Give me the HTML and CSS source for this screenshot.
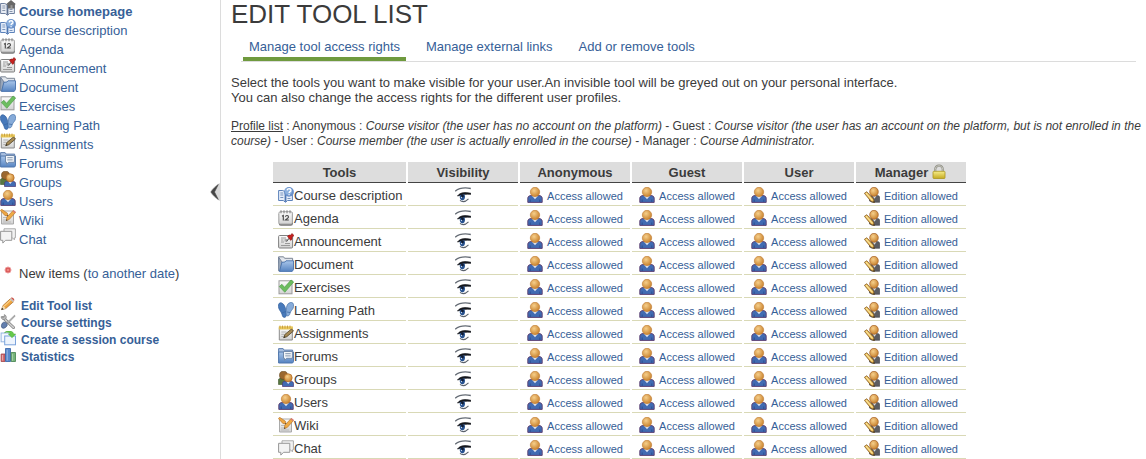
FILE: index.html
```html
<!DOCTYPE html>
<html lang="en">
<head>
<meta charset="utf-8">
<title>Edit Tool list</title>
<link rel="stylesheet" href="styles.css">
<script src="tools.js" defer></script>
</head>
<body>
<svg class="sprite" aria-hidden="true">
  <defs>
    <linearGradient id="blue" x1="0" y1="0" x2="0" y2="1"><stop offset="0" stop-color="#a9c6ea"/><stop offset="1" stop-color="#5583c1"/></linearGradient>
    <linearGradient id="paper" x1="0" y1="0" x2="0" y2="1"><stop offset="0" stop-color="#fdfdfd"/><stop offset="1" stop-color="#d2d2d2"/></linearGradient>
    <radialGradient id="skin" cx=".4" cy=".35" r=".7"><stop offset="0" stop-color="#f6cf8b"/><stop offset="1" stop-color="#c67d27"/></radialGradient>
    <linearGradient id="gold" x1="0" y1="0" x2="0" y2="1"><stop offset="0" stop-color="#f7ed89"/><stop offset="1" stop-color="#c5ab22"/></linearGradient>
  </defs>
  <symbol id="i-home" viewBox="0 0 16 16"><path d="M.6 3.5h4.2L7.5 5l2-1.5h4.9v10H9.5l-2 1.8-2.2-1.8H.6z" fill="#e9edf4" stroke="#70819f"/><path d="M7.5 5v9.8" stroke="#5d7192" stroke-width="1.8"/><path d="M2.3 6h3M2.3 8h3M2.3 10.500h3M9.500 9.500h3M9.500 11.500h3" stroke="#8895ab"/><path d="M6.300 4 11 0l4.700 4-1 1v3.500H7.800V5z" fill="#686868"/><path d="M10.500 5.200h2v3.300h-2z" fill="#999"/></symbol>
  <symbol id="i-desc" viewBox="0 0 16 16"><path d="M.6 3.500h4.200L7.500 5l2-1.500h4.900v10H9.500l-2 1.800-2.200-1.800H.6z" fill="#e6eefa" stroke="#5c82ba"/><path d="M7.500 5v9.800" stroke="#4e76b1" stroke-width="1.8"/><path d="M2.300 6h3M2.300 8h3M2.300 10.500h3M9.500 11.500h3" stroke="#7894bd"/><circle cx="11" cy="4.900" r="4.900" fill="#6990ca"/><circle cx="10.400" cy="4.200" r="3.500" fill="#8cb1df"/><path d="M9.200 3.400c.2-2.600 4.200-2 3.600.3-.3 1-1.700 1-1.700 2.300M11.100 7.200v1.100" fill="none" stroke="#fff" stroke-width="1.400"/></symbol>
  <symbol id="i-agenda" viewBox="0 0 16 16"><rect x=".7" y="2" width="14.300" height="13.700" rx="2.200" fill="#777"/><rect x=".9" y="1.700" width="13.400" height="12.300" rx="1.500" fill="url(#paper)" stroke="#aaa"/><path d="M3 .3v3M6 .3v3M9 .3v3M12 .3v3" stroke="#777"/><path d="M4 6.300l1.300-.8v5M7.500 6.800c0-1.700 3-1.600 3 .1 0 1-1.400 1.500-3 3.100h3.300" fill="none" stroke="#444" stroke-width="1.100"/></symbol>
  <symbol id="i-news" viewBox="0 0 16 16"><rect x=".6" y="2.500" width="14" height="12.500" rx="1" fill="url(#paper)" stroke="#808080"/><path d="M3 5h5M3 7h2.500M3 9h3M7 10.500h5M3 12.500h9" stroke="#999"/><path d="M6.500 6h3v2.500h-3z" fill="#aaa"/><path d="M8.400 8.500l3-3.500" stroke="#444"/><path d="M9.500 3.400 11 2l1.500.3L14 .5 16 2.600l-2 1.600v2l-1.300 1.200z" fill="#c6221f" stroke="#8a1412" stroke-width=".6"/></symbol>
  <symbol id="i-doc" viewBox="0 0 16 16"><path d="M.6.8h5l1 1.500h8V7H.6z" fill="#e2e6ec" stroke="#7d8795"/><path d="M.6 1.300v13.600h1.700L4 6z" fill="#9ba8bb" stroke="#77869c"/><path d="M3.900 6.300 7 6l1-1.200h7.500v8.700l-1.300 1.900H1.500z" fill="url(#blue)" stroke="#4772ac" stroke-width=".9"/></symbol>
  <symbol id="i-check" viewBox="0 0 16 16"><rect x="1" y="1.800" width="13" height="13" fill="url(#paper)" stroke="#9b9b9b"/><path d="M1.300 7.500 3.900 5.300l2.600 3L13 1l2.700 2-8.900 10.300z" fill="#6dbd60" stroke="#479b40" stroke-width=".6"/></symbol>
  <symbol id="i-path" viewBox="0 0 16 16"><path d="M.4 4.500C.1 1.700 1.600.3 3.500.9 6 1.700 7.600 5 7.900 9c.9 3.300.6 6.300-1.300 6.400-2.400.2-2.200-2.600-3.100-4.400C2.300 8.700.7 7.500.4 4.500z" fill="#4779ba" stroke="#315f9e" stroke-width=".7"/><path d="M15.600 4.500c.5-3-1.100-4.500-3.300-4C9.300 1.200 8.300 4.500 8.300 8c-.3 3-.7 5.800 1.100 5.900 2.300.1 2.300-2 3-3.700.8-2.100 2.700-2.600 3.200-5.700z" fill="#86abd9" stroke="#4470a8" stroke-width=".7"/><path d="m3.800 11 3.800-1.400M9 10l3.300.6" stroke="#39659f" stroke-width=".7"/></symbol>
  <symbol id="i-assign" viewBox="0 0 16 16"><path d="M1.300 2.500h13v12.500h-13z" fill="url(#paper)" stroke="#8b8b8b"/><path d="M.8 1.300h14v3.200H.8z" fill="#ebcb5a"/><path d="M2 .6v3M4.500.6v3M7 .6v3M9.500.6v3M12 .6v3" stroke="#c9a043"/><path d="M3.300 7h5M3.300 9.300h3M3.300 11.500h2" stroke="#b1b1b1"/><path d="m5.700 12.700 1.100-3.200L13.500 4l2 2-6.700 5.700z" fill="#a68a55" stroke="#514327" stroke-width=".8"/><path d="m5.500 13 1-1.700.9.800z" fill="#222"/></symbol>
  <symbol id="i-forum" viewBox="0 0 16 16"><path d="M.6.600h4.500l1 1.500h8.500v5H.6z" fill="#a8bfdf" stroke="#5e7faf"/><path d="M.6 4h15v9.500l-1 1.500H.6z" fill="url(#blue)" stroke="#5077ac"/><path d="M5.500 3.500h8.900v6.800H8.500l-2 2.200v-2.200h-1z" fill="#f4f7fa" stroke="#7089ab"/><path d="M7.300 5.700h5.400M7.300 7.900h5.400" stroke="#8093ac"/></symbol>
  <symbol id="i-user" viewBox="0 0 16 16"><path d="M.8 15.400v-4.200c0-1.800 1.500-2.700 3.700-2.700h7c2.200 0 3.700.9 3.700 2.700v4.200z" fill="#416bb2" stroke="#58386b" stroke-width=".9"/><path d="M3.200 15v-2.500M12.800 15v-2.500" stroke="#2d4e92"/><path d="m5 8.700 3 3.500 3-3.500z" fill="#e3e8f2"/><ellipse cx="8" cy="5" rx="4.700" ry="4.700" fill="url(#skin)" stroke="#bd792f" stroke-width=".6"/></symbol>
  <symbol id="i-group" viewBox="0 0 16 16"><path d="M.5 13.500V8.300L2.500 7h5l2 3.500v3z" fill="#577741" stroke="#3e552c" stroke-width=".6"/><ellipse cx="5.500" cy="4.300" rx="4" ry="4.100" fill="#9b6830" stroke="#65451d" stroke-width=".6"/><path d="M4.500 15.500v-2.700c0-2 1.300-2.500 3-2.500h5.400c1.700 0 2.700 1 2.700 2.500v2.700z" fill="#416bb2" stroke="#4a3572" stroke-width=".7"/><path d="m8.300 10.500 1.900 2.500 2-2.500z" fill="#e9eef7"/><circle cx="10.200" cy="6.800" r="4" fill="url(#skin)" stroke="#b36b25" stroke-width=".7"/></symbol>
  <symbol id="i-wiki" viewBox="0 0 16 16"><path d="M1.500 2h12v13h-12z" fill="url(#paper)" stroke="#aaa"/><path d="M3 8.500h4M3 11h3M3 13h8" stroke="#bbb"/><path d="M.4 1.500 1.600.3 7.400 4.200 8 7.200 4.800 6.400z" fill="#eea744" stroke="#b8782f" stroke-width=".7"/><path d="m6.300 11.500.6-3.300L13.100 1.500l2.400 2-6.300 7z" fill="#efaa45" stroke="#b8782f" stroke-width=".7"/><path d="m12.500 2.200 1-1.200L15.800 2.700l-1 1.500z" fill="#d77c76"/><path d="m6 12 .6-1.700 1 .9zM8 7.300l-1.300-.6.700-.6z" fill="#333"/></symbol>
  <symbol id="i-chat" viewBox="0 0 16 16"><path d="M4 .8h11.400v9h-1v2l-2-2H4z" fill="#f2f2f2" stroke="#aaa"/><path d="M.6 3.300h11.200v9H5.500l-2.700 2.800v-2.800H.6z" fill="#f3f3f3" stroke="#969696"/></symbol>
  <symbol id="i-eye" viewBox="0 0 16 16"><path d="M.2 4.300C3.800 1.200 9.300.3 15.800 1.500" fill="none" stroke="#646b74" stroke-width="1.300"/><path d="M2.500 9C5.500 5 10.300 5.200 15.900 6.300v1C11 6.900 8 7.500 2.500 9z" fill="#15171c" stroke="#15171c" stroke-width=".7"/><path d="M4.700 8.300c-.2 3.900 1.200 5.700 3.300 5 2-.6 2.500-3.500 1.500-6z" fill="#27528f"/><circle cx="7.400" cy="9" r="1.400" fill="#101b31"/><circle cx="6.500" cy="10.500" r=".7" fill="#c4d9f1"/><path d="M5 13.300c2.500 2.200 5.800 1.200 8.500-1.500" fill="none" stroke="#5b626b" stroke-width="1.100"/></symbol>
  <symbol id="i-manager" viewBox="0 0 16 16"><path d="M5.500 14V9.500l2-1h5.800c1.600 0 2.400 1 2.400 2.300v4.500H8z" fill="#5c5c60" stroke="#414146" stroke-width=".6"/><path d="m8.500 8.800 2 3 2-3z" fill="#ddd"/><ellipse cx="10" cy="4.800" rx="4.300" ry="4.500" fill="url(#skin)" stroke="#a35f26" stroke-width=".7"/><path d="M.4 6.300 2.800 4.700 9.500 12l.9 3.700-3.700-1.600z" fill="#e9b54c" stroke="#79501d" stroke-width=".7"/><path d="m2 6.200 6.500 7.100" stroke="#fae59c" stroke-width="1.200"/><path d="m8.900 15 1.700.8-.4-1.800z" fill="#222"/></symbol>
  <symbol id="i-lock" viewBox="0 0 16 16"><path d="M4.200 8V5.600c0-5.300 7.600-5.300 7.600 0V8" fill="none" stroke="#8d8d83" stroke-width="2.200"/><path d="M4.200 8V5.600c0-5.100 7.600-5.100 7.600 0V8" fill="none" stroke="#d8d8cf" stroke-width=".8"/><rect x="2" y="7.300" width="12" height="7.200" rx=".8" fill="url(#gold)" stroke="#ab951f" stroke-width=".8"/></symbol>
  <symbol id="i-pencil" viewBox="0 0 16 16"><path d="M1.500 12.600 3 8.500 10.300 1.800l3.100 3-7.600 6.700z" fill="#efa53f" stroke="#a56826" stroke-width=".7"/><path d="m4.100 9.100 6.800-6.200" stroke="#fad18a" stroke-width="1.200"/><path d="m9.800 2.200 1-1 3.100 3-1 1z" fill="#c3c3c3"/><path d="M10.900 1.100c1-1.500 4.400.8 3.100 3z" fill="#ca5549"/><path d="M1.500 12.600 3 8.500l2.800 3z" fill="#f3dbb0"/><path d="m1.300 12.900.8-2.100 1.500 1.400z" fill="#333"/></symbol>
  <symbol id="i-settings" viewBox="0 0 16 16"><path d="M3 3.500 13.500 13.500" stroke="#777" stroke-width="3" stroke-linecap="round"/><path d="M3 3.500 13.500 13.500" stroke="#d3d3d3" stroke-width="1.700" stroke-linecap="round"/><path d="M1.200 2.500c-.3 3.500 3.900 4.200 5 1.500C6.600 2.700 5.800 1 4.300.6v2.200l-1.200.8z" fill="#bbb" stroke="#777" stroke-width=".6"/><path d="m7 8.600 7.500-7.300.7.700-7.300 7.500z" fill="#ddd" stroke="#777" stroke-width=".7"/><path d="M2.700 8.800c1.500-1.700 5.300.3 4.400 2.800-.5 1.400-3.300 3.500-4.800 2.400C.7 12.800 1.500 10.200 2.700 8.800z" fill="#637fae" stroke="#374f78" stroke-width=".7"/></symbol>
  <symbol id="i-create" viewBox="0 0 16 16"><rect x="1.100" y="2" width="10.500" height="8.800" fill="#f5f9ff" stroke="#94b4e0"/><rect x="4.700" y="5" width="10.800" height="8.800" fill="#edf4fd" stroke="#7ba3dc"/><path d="M4.500 1.600C8-1.200 13.200-.5 13.500 3h2.200l-3.600 3.700L8.300 3h2C9.800 1.100 7.300.7 4.500 1.600z" fill="#66ca4b" stroke="#42a532" stroke-width=".5"/></symbol>
  <symbol id="i-stats" viewBox="0 0 16 16"><path d="M1.100 6h4v7.500h-4z" fill="#d26b6f" stroke="#a24349" stroke-width=".8"/><path d="M5.500.5h5v13h-5z" fill="#5788cc" stroke="#315fa6" stroke-width=".8"/><path d="M11.200 4.500h4.300v9h-4.300z" fill="#75b478" stroke="#417f4d" stroke-width=".8"/><path d="M2.500 7v5.500M7.200 1.700v11M12.600 5.800v7" stroke="#fff" stroke-opacity=".4"/></symbol>
</svg>
<div class="layout">
  <nav class="sidebar" aria-label="Course tools">
    <ul class="tool-links">
      <li class="current"><svg class="icon"><use href="#i-home"/></svg><a href="#">Course homepage</a></li>
      <li><svg class="icon"><use href="#i-desc"/></svg><a href="#">Course description</a></li>
      <li><svg class="icon"><use href="#i-agenda"/></svg><a href="#">Agenda</a></li>
      <li><svg class="icon"><use href="#i-news"/></svg><a href="#">Announcement</a></li>
      <li><svg class="icon"><use href="#i-doc"/></svg><a href="#">Document</a></li>
      <li><svg class="icon"><use href="#i-check"/></svg><a href="#">Exercises</a></li>
      <li><svg class="icon"><use href="#i-path"/></svg><a href="#">Learning Path</a></li>
      <li><svg class="icon"><use href="#i-assign"/></svg><a href="#">Assignments</a></li>
      <li><svg class="icon"><use href="#i-forum"/></svg><a href="#">Forums</a></li>
      <li><svg class="icon"><use href="#i-group"/></svg><a href="#">Groups</a></li>
      <li><svg class="icon"><use href="#i-user"/></svg><a href="#">Users</a></li>
      <li><svg class="icon"><use href="#i-wiki"/></svg><a href="#">Wiki</a></li>
      <li><svg class="icon"><use href="#i-chat"/></svg><a href="#">Chat</a></li>
    </ul>
    <p class="new-items"><svg class="icon" viewBox="0 0 16 16"><circle cx="8" cy="4" r="3" fill="#d95a5a" stroke="#ed9c9c"/><circle cx="8" cy="4" r="1.300" fill="#ef8580"/></svg><span>New items (<a href="#">to another date</a>)</span></p>
    <ul class="admin-links">
      <li><svg class="icon"><use href="#i-pencil"/></svg><a href="#">Edit Tool list</a></li>
      <li><svg class="icon"><use href="#i-settings"/></svg><a href="#">Course settings</a></li>
      <li><svg class="icon"><use href="#i-create"/></svg><a href="#">Create a session course</a></li>
      <li><svg class="icon"><use href="#i-stats"/></svg><a href="#">Statistics</a></li>
    </ul>
    <button class="collapse" type="button" aria-label="Hide menu"><svg viewBox="0 0 10 18"><path d="M10 0C6 2 2 5 0 9c2 4 6 7 10 9z" fill="#d9d9d9"/><path d="M8.300 1.500C6 3.400 3 6 1 9c2 3 5 5.600 7.300 7.500L4.500 9z" fill="#444" stroke="#444" stroke-width=".6"/></svg></button>
  </nav>
  <main class="content">
    <h1>EDIT TOOL LIST</h1>
    <nav class="tabs" aria-label="Sections">
      <a class="active" href="#">Manage tool access rights</a>
      <a href="#">Manage external links</a>
      <a href="#">Add or remove tools</a>
    </nav>
    <p class="intro">Select the tools you want to make visible for your user.An invisible tool will be greyed out on your personal interface.<br>You can also change the access rights for the different user profiles.</p>
    <p class="profiles"><u>Profile list</u> : Anonymous : <em>Course visitor (the user has no account on the platform)</em> - Guest : <em>Course visitor (the user has an account on the platform, but is not enrolled in the course)</em> - User : <em>Course member (the user is actually enrolled in the course)</em> - Manager : <em>Course Administrator.</em></p>
    <table class="rights">
      <colgroup><col class="col-tool"><col class="col-right" span="5"></colgroup>
      <thead>
        <tr><th>Tools</th><th>Visibility</th><th>Anonymous</th><th>Guest</th><th>User</th><th><span class="pair">Manager <svg class="icon"><use href="#i-lock"/></svg></span></th></tr>
      </thead>
      <tbody id="rights-body"></tbody>
    </table>
  </main>
</div>
</body>
</html>
```
FILE: tools.js
```js
const tools = [
  ["desc", "Course description"],
  ["agenda", "Agenda"],
  ["news", "Announcement"],
  ["doc", "Document"],
  ["check", "Exercises"],
  ["path", "Learning Path"],
  ["assign", "Assignments"],
  ["forum", "Forums"],
  ["group", "Groups"],
  ["user", "Users"],
  ["wiki", "Wiki"],
  ["chat", "Chat"]
];

const icon = (name) => `<svg class="icon"><use href="#i-${name}"/></svg>`;
const right = (name, label) =>
  `<td><a class="right" href="#">${icon(name)}<span>${label}</span></a></td>`;

document.getElementById("rights-body").innerHTML = tools
  .map(([name, label]) => `<tr>
    <td><span class="tool">${icon(name)}${label}</span></td>
    <td><a class="eye" href="#" aria-label="Hide ${label}">${icon("eye")}</a></td>
    ${right("user", "Access allowed").repeat(3)}
    ${right("manager", "Edition allowed")}
  </tr>`)
  .join("");
```
FILE: styles.css
```css
* {
  box-sizing: border-box;
}

body {
  margin: 0;
  background: #fff;
  color: #3b3b3b;
  font: 13px/15px "Liberation Sans", Arial, sans-serif;
}

a {
  color: #366097;
  text-decoration: none;
}

ul {
  margin: 0;
  padding: 0;
  list-style: none;
}

.sprite {
  position: absolute;
  width: 0;
  height: 0;
}

.icon {
  flex: none;
  width: 16px;
  height: 16px;
}

.layout {
  display: flex;
  min-height: 100vh;
}

.sidebar {
  position: relative;
  flex: none;
  width: 221px;
  border-right: 1px solid #dcdcdc;
}

.tool-links li {
  display: flex;
  align-items: flex-start;
  gap: 3px;
  height: 19px;
}

.tool-links a {
  padding-top: 4px;
}

.current {
  font-weight: bold;
}

.new-items {
  display: flex;
  gap: 3px;
  margin: 19px 0 0;
}

.admin-links {
  margin-top: 15px;
  font-size: 12px;
  font-weight: bold;
}

.admin-links li {
  display: flex;
  align-items: flex-start;
  gap: 5px;
  height: 17px;
}

.admin-links a {
  padding-top: 2px;
}

.collapse {
  position: absolute;
  top: 183px;
  right: 0;
  width: 10px;
  height: 18px;
  padding: 0;
  border: 0;
  background: none;
}

.collapse svg {
  display: block;
  width: 10px;
  height: 18px;
}

.content {
  flex: 1;
  min-width: 0;
  padding-left: 10px;
}

h1 {
  margin: 0;
  font-size: 26px;
  font-weight: normal;
  line-height: 28px;
}

.tabs {
  display: flex;
  gap: 14px;
  margin: 11px 10px 0;
  padding-left: 2px;
  border-bottom: 1px solid #dcdcdc;
}

.tabs a {
  padding: 0 6px 3px;
  border-bottom: 4px solid transparent;
}

.tabs .active {
  border-bottom-color: #6f9a3e;
}

.intro {
  margin: 13px 0 0;
}

.profiles {
  margin: 14px 0 0;
  font-size: 12px;
}

.rights {
  width: 697px;
  max-width: 100%;
  margin: 11px 0 0 40px;
  border-spacing: 2px;
  table-layout: fixed;
}

.col-tool {
  width: 133px;
}

.rights th,
.rights td {
  height: 21px;
  padding: 0;
}

.rights th {
  border-bottom: 1px solid #444;
  background: #ddd;
}

.rights td {
  border-bottom: 1px solid #d9d9b6;
}

.pair,
.tool,
.right,
.eye {
  display: flex;
  align-items: center;
}

.pair {
  justify-content: center;
  gap: 3px;
}

.tool {
  padding-left: 5px;
}

.eye {
  justify-content: center;
}

.right {
  justify-content: center;
  gap: 4px;
  font-size: 11px;
}

.right span {
  padding-top: 2px;
}
```
